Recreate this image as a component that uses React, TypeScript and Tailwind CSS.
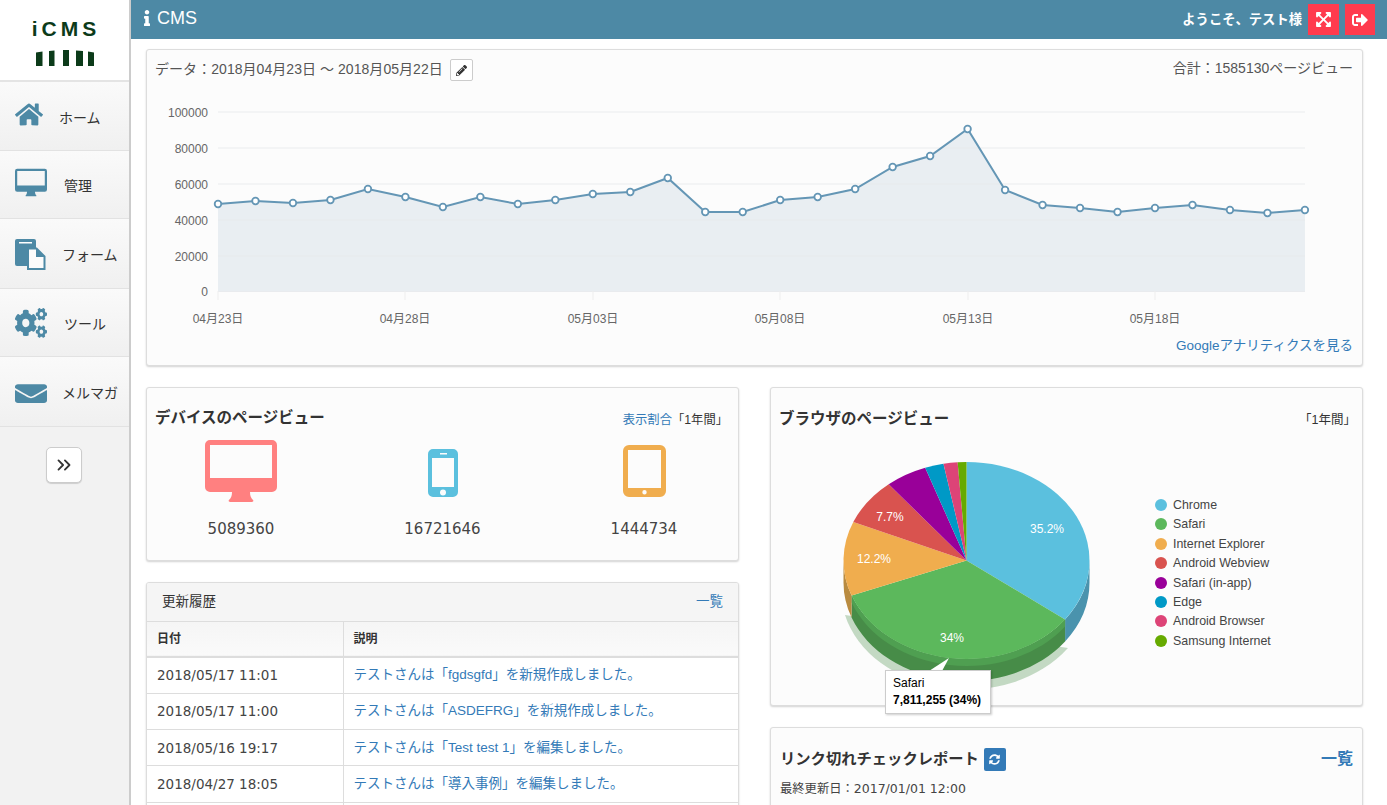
import React from "react";
import {
  FaHome,
  FaCogs,
  FaEnvelope,
  FaInfo,
  FaExpandArrowsAlt,
  FaSignOutAlt,
  FaPencilAlt,
  FaSyncAlt,
} from "react-icons/fa";
import { ChevronsRight } from "lucide-react";

const sans = "font-['Liberation_Sans','Noto_Sans_CJK_JP',sans-serif]";
const wide = "font-['DejaVu_Sans',sans-serif]";
const panel = "rounded-[3px] border border-[#ddd] bg-[#fcfcfc] shadow-[0_1px_2px_rgba(0,0,0,0.18)]";

// full width colon sits in the middle of its box in the TC font, like the reference
const Colon = () => <span className="font-['Noto_Sans_CJK_TC',sans-serif]">：</span>;

const DesktopIcon = ({ className }: { className: string }) => (
  <svg viewBox="0 0 72 62" className={className} fill="currentColor">
    <path
      fillRule="evenodd"
      d="M5 0h62a5 5 0 0 1 5 5v42a5 5 0 0 1-5 5H45c0 4 1 6 3 8 1 1 0 2-1 2H25c-1 0-2-1-1-2 2-2 3-4 3-8H5a5 5 0 0 1-5-5V5a5 5 0 0 1 5-5zm0 5v33h62V5z"
    />
  </svg>
);

const PhoneIcon = ({ className }: { className: string }) => (
  <svg viewBox="0 0 30 48" className={className} fill="currentColor">
    <path
      fillRule="evenodd"
      d="M5 0h20a5 5 0 0 1 5 5v38a5 5 0 0 1-5 5H5a5 5 0 0 1-5-5V5a5 5 0 0 1 5-5zm7 4v1.500h7V4zM4 9v29h22V9zm11 31.500a3 3 0 1 0 0 6 3 3 0 0 0 0-6z"
    />
  </svg>
);

const TabletIcon = ({ className }: { className: string }) => (
  <svg viewBox="0 0 43 52" className={className} fill="currentColor">
    <path
      fillRule="evenodd"
      d="M6 0h31a6 6 0 0 1 6 6v40a6 6 0 0 1-6 6H6a6 6 0 0 1-6-6V6a6 6 0 0 1 6-6zm-1 5v38h33V5zm16.500 40a2.200 2.200 0 1 0 0 4.400 2.200 2.200 0 0 0 0-4.400z"
    />
  </svg>
);

const FormIcon = ({ className }: { className: string }) => (
  <svg viewBox="0 0 31 31" className={className}>
    <path d="M2 0h17a2 2 0 0 1 2 2v25H2a2 2 0 0 1-2-2V2a2 2 0 0 1 2-2z" fill="#4d89a5" />
    <rect x="4" y="3" width="13" height="1.500" fill="#fff" />
    <path d="M13 9.500h8.500l8 8V30H13z" fill="#fbfbfb" stroke="#4d89a5" strokeWidth="2" />
    <path d="M21 9.500V18h8.500z" fill="#4d89a5" />
  </svg>
);

const navItems = [
  { label: "ホーム", icon: <FaHome className="h-[25px] w-[28px]" />, h: "h-[69px]", text: "ml-[12px]", iconPos: "-mt-[3px]" },
  { label: "管理", icon: <DesktopIcon className="h-[29px] w-[33px]" />, h: "h-[68px]", text: "ml-[17px]", iconPos: "-mt-[4px]" },
  { label: "フォーム", icon: <FormIcon className="h-[31px] w-[31px]" />, h: "h-[70px]", text: "ml-[15px]", iconPos: "mt-[2px]" },
  { label: "ツール", icon: <FaCogs preserveAspectRatio="none" className="h-[30px] w-[33px]" />, h: "h-[68px]", text: "ml-[17px]", iconPos: "mt-0" },
  { label: "メルマガ", icon: <FaEnvelope preserveAspectRatio="none" className="h-[25px] w-[32px]" />, h: "h-[70px]", text: "ml-[15px]", iconPos: "mt-[3px]" },
];

const chartY = [204, 201, 203, 200, 189, 197, 207, 197, 204, 200, 194, 192, 178, 212, 212, 200, 197, 189, 167, 156, 129, 190, 205, 208, 212, 208, 205, 210, 213, 210];
const chartPts = chartY.map((y, i) => [218 + i * 37.48, y]);
const gridLines = [
  { y: 112, label: "100000" },
  { y: 148, label: "80000" },
  { y: 184, label: "60000" },
  { y: 220, label: "40000" },
  { y: 256, label: "20000" },
  { y: 291.5, label: "0" },
];
const xTicks = [
  { x: 218, label: "04月23日" },
  { x: 405, label: "04月28日" },
  { x: 593, label: "05月03日" },
  { x: 780, label: "05月08日" },
  { x: 968, label: "05月13日" },
  { x: 1155, label: "05月18日" },
];

const PageViewChart = () => {
  const line = chartPts.map((p) => p.join(",")).join(" ");
  return (
    <svg viewBox="147 90 1215 240" className="block h-[240px] w-[1215px]">
      <polygon points={`218,291.500 ${line} 1305,291.500`} fill="#e9eef2" />
      {gridLines.map((g) => (
        <g key={g.y}>
          <line x1="218" x2="1305" y1={g.y} y2={g.y} stroke="#e6e9eb" strokeOpacity="0.8" />
          <text x="208" y={g.y + 4.5} textAnchor="end" fontSize="12" fill="#666">
            {g.label}
          </text>
        </g>
      ))}
      {xTicks.map((t) => (
        <g key={t.x}>
          <line x1={t.x} x2={t.x} y1="291" y2="300" stroke="#eee" />
          <text x={t.x} y="323" textAnchor="middle" fontSize="12" fill="#666">
            {t.label}
          </text>
        </g>
      ))}
      <polyline points={line} fill="none" stroke="#6496b5" strokeWidth="2" />
      {chartPts.map(([x, y]) => (
        <circle key={x} cx={x} cy={y} r="3.300" fill="#fff" stroke="#6496b5" strokeWidth="1.800" />
      ))}
    </svg>
  );
};

const browsers = [
  { name: "Chrome", pct: 35.2, color: "#5bc0de", label: "35.2%", lx: 1047, ly: 533 },
  { name: "Safari", pct: 34, color: "#5cb85c", label: "34%", lx: 952, ly: 642 },
  { name: "Internet Explorer", pct: 12.2, color: "#f0ad4e", label: "12.2%", lx: 874, ly: 563 },
  { name: "Android Webview", pct: 7.7, color: "#d9534f", label: "7.7%", lx: 890, ly: 521 },
  { name: "Safari (in-app)", pct: 5.45, color: "#990099", label: "", lx: 0, ly: 0 },
  { name: "Edge", pct: 2.45, color: "#0099c6", label: "", lx: 0, ly: 0 },
  { name: "Android Browser", pct: 1.85, color: "#dd4477", label: "", lx: 0, ly: 0 },
  { name: "Samsung Internet", pct: 1.15, color: "#66aa00", label: "", lx: 0, ly: 0 },
];

const cx = 966.5;
const cy = 560.5;
const rx = 123;
const ry = 98.5;
const pt = (deg: number, off = 0) => {
  const a = (deg * Math.PI) / 180;
  return `${(cx + rx * Math.sin(a)).toFixed(2)} ${(cy - ry * Math.cos(a) + off).toFixed(2)}`;
};
const slicePath = (a: number, b: number) =>
  `M${cx} ${cy}L${pt(a)}A${rx} ${ry} 0 ${b - a > 180 ? 1 : 0} 1 ${pt(b)}Z`;
const sidePath = (a: number, b: number, d: number) =>
  `M${pt(a)}A${rx} ${ry} 0 0 1 ${pt(b)}L${pt(b, d)}A${rx} ${ry} 0 0 0 ${pt(a, d)}Z`;

const BrowserPie = () => {
  let start = 0;
  const slices = browsers.map((b) => {
    const s = { ...b, a: start, b: start + (b.pct / 100) * 360 };
    start = s.b;
    return s;
  });
  return (
    <svg viewBox="771 450 376 250" className="block h-[250px] w-[376px] overflow-visible">
      {/* soft shadow under the disc */}
      <path d="M845 615A125 99 0 0 0 1068 648Z" fill="#c3d9c3" />
      <path d={sidePath(90, 126.72, 22)} fill="#4a93ad" />
      <path d={sidePath(126.72, 249.12, 22)} fill="#478c48" />
      <path d={sidePath(126.72, 249.12, 7)} fill="#4f9f51" />
      <path d={sidePath(249.12, 270, 22)} fill="#b98b40" />
      {slices.map((s) => (
        <path key={s.name} d={slicePath(s.a, s.b)} fill={s.color} />
      ))}
      {slices
        .filter((s) => s.label)
        .map((s) => (
          <text key={s.name} x={s.lx} y={s.ly} textAnchor="middle" fontSize="12" fill="#fff">
            {s.label}
          </text>
        ))}
      <polygon points="929,671 949,658 942,671" fill="#fff" />
    </svg>
  );
};

const historyRows = [
  { date: "2018/05/17 11:01", text: "テストさんは「fgdsgfd」を新規作成しました。" },
  { date: "2018/05/17 11:00", text: "テストさんは「ASDEFRG」を新規作成しました。" },
  { date: "2018/05/16 19:17", text: "テストさんは「Test test 1」を編集しました。" },
  { date: "2018/04/27 18:05", text: "テストさんは「導入事例」を編集しました。" },
];

export default function App() {
  return (
    <div className={`flex h-[805px] overflow-hidden bg-white text-[#333] ${sans}`}>
      {/* Sidebar */}
      <aside className="w-[131px] shrink-0 border-r-2 border-[#ccc] bg-[#f2f2f2]">
        <div className="flex h-[82px] flex-col items-center border-b-2 border-[#e4e4e4] bg-white pt-[17px]">
          <div className="pl-[3px] text-[21px] leading-[24px] font-bold tracking-[4px] text-[#0c3b1a]">iCMS</div>
          <svg viewBox="0 0 58 16" className="mt-[9px] h-[16px] w-[58px]" fill="#0c3b1a">
            <path d="M0 2.500 6.500 1.500V16H0z" />
            <path d="M13 1 18.500 .500V16H13z" />
            <path d="M27 0h6v16h-6z" />
            <path d="M40 .500 47 1v15h-7z" />
            <path d="M52 1.500 58 2.500V16h-6z" />
          </svg>
        </div>
        {navItems.map((item) => (
          <div
            key={item.label}
            className={`flex items-center border-b border-[#e2e2e2] bg-gradient-to-b from-[#fafafa] to-[#f0f0f0] pl-[15px] ${item.h}`}
          >
            <span className={`flex w-[32px] justify-start text-[#4d89a5] ${item.iconPos}`}>{item.icon}</span>
            <span className={`mt-[4px] text-[14px] text-[#333] ${item.text}`}>{item.label}</span>
          </div>
        ))}
        <div className="mt-[20px] flex justify-center pr-[2px]">
          <button className="flex h-[36px] w-[36px] items-center justify-center rounded-[5px] border border-[#ccc] bg-white shadow-[0_1px_1px_rgba(0,0,0,0.15)]">
            <ChevronsRight className="h-[22px] w-[22px] text-[#333]" strokeWidth={2} />
          </button>
        </div>
      </aside>

      <div className="min-w-0 flex-1">
        {/* Top bar */}
        <header className="flex h-[39px] items-center justify-between bg-[#4d89a5] pl-[11px] pr-[12px] text-white">
          <div className="flex items-center gap-[5px]">
            <FaInfo className="-mt-[3px] h-[16px] w-[10px]" />
            <span className="-mt-[3px] text-[18px]">CMS</span>
          </div>
          <div className="flex items-center">
            <span className="mr-[6px] text-[13.300px] font-bold">ようこそ、テスト様</span>
            <button className="flex h-[31px] w-[31px] items-center justify-center bg-[#ff3b4e]">
              <FaExpandArrowsAlt className="h-[17px] w-[17px]" />
            </button>
            <button className="ml-[6px] flex h-[31px] w-[30px] items-center justify-center bg-[#ff3b4e]">
              <FaSignOutAlt className="h-[16px] w-[16px]" />
            </button>
          </div>
        </header>

        <main className="px-[15px] pt-[10px]">
          {/* Page view chart */}
          <section className={`h-[317px] w-[1217px] ${panel}`}>
            <div className="flex h-[40px] items-center justify-between px-[8px]">
              <div className="flex items-center text-[14px] text-[#555]">
                <span className="-mt-[2px] tracking-[0.05px]">
                  データ
                  <Colon />
                  2018月04月23日 〜 2018月05月22日
                </span>
                <button className="ml-[7px] flex h-[22px] w-[23px] items-center justify-center rounded-[2px] border border-[#ccc] bg-white">
                  <FaPencilAlt className="h-[11px] w-[11px] text-[#333]" />
                </button>
              </div>
              <span className="-mt-[4px] mr-[1px] text-[14px] text-[#555]">
                合計
                <Colon />
                1585130ページビュー
              </span>
            </div>
            <PageViewChart />
            <div className="mt-[6px] pr-[9px] text-right text-[13.500px] text-[#337ab7]">Googleアナリティクスを見る</div>
          </section>

          <div className="mt-[21px] grid w-[1217px] grid-cols-[593px_593px] gap-x-[31px]">
            <div className="flex flex-col gap-[21px]">
              {/* Devices */}
              <section className={`h-[174px] ${panel}`}>
                <div className="flex items-center justify-between pl-[8px] pr-[10px] pt-[18px]">
                  <h2 className="text-[15.500px] leading-[24px] font-bold">デバイスのページビュー</h2>
                  <span className="mt-[5px] text-[12.300px]">
                    <span className="text-[#337ab7]">表示割合</span>「1年間」
                  </span>
                </div>
                <div className="grid grid-cols-[188px_215px_188px] pt-[10px]">
                  <div className="flex flex-col items-center">
                    <div className="flex h-[62px] items-end">
                      <DesktopIcon className="h-[62px] w-[72px] text-[#ff8080]" />
                    </div>
                    <span className={`mt-[16px] text-[15px] text-[#444] ${wide}`}>5089360</span>
                  </div>
                  <div className="flex flex-col items-center">
                    <div className="flex h-[57px] items-end">
                      <PhoneIcon className="h-[48px] w-[30px] text-[#5bc0de]" />
                    </div>
                    <span className={`mt-[21px] text-[15px] text-[#444] ${wide}`}>16721646</span>
                  </div>
                  <div className="flex flex-col items-center">
                    <div className="flex h-[57px] items-end">
                      <TabletIcon className="h-[52px] w-[43px] text-[#f0ad4e]" />
                    </div>
                    <span className={`mt-[21px] text-[15px] text-[#444] ${wide}`}>1444734</span>
                  </div>
                </div>
              </section>

              {/* Update history */}
              <section className={`${panel} overflow-hidden`}>
                <div className="flex h-[39px] items-center justify-between border-b border-[#ddd] bg-[#f5f5f5] px-[15px] text-[13.500px]">
                  <span>更新履歴</span>
                  <span className="text-[#337ab7]">一覧</span>
                </div>
                <table className="w-full border-collapse text-[13.500px]">
                  <thead>
                    <tr className="h-[35px] border-b-2 border-[#ddd] bg-gradient-to-b from-[#f5f5f5] to-[#fafafa] text-left text-[12px]">
                      <th className="w-[196px] border-r border-[#ddd] pl-[10px] font-bold">日付</th>
                      <th className="pl-[10px] font-bold">説明</th>
                    </tr>
                  </thead>
                  <tbody className="bg-white">
                    {historyRows.map((row) => (
                      <tr key={row.text} className="h-[36.300px] border-b border-[#ddd]">
                        <td className={`border-r border-[#ddd] pl-[10px] text-[13.500px] text-[#444] ${wide}`}>{row.date}</td>
                        <td className="pl-[10px] text-[#337ab7]">{row.text}</td>
                      </tr>
                    ))}
                    <tr className="h-[36px]">
                      <td className="border-r border-[#ddd]" />
                      <td />
                    </tr>
                  </tbody>
                </table>
              </section>
            </div>

            <div className="flex flex-col gap-[21px]">
              {/* Browsers */}
              <section className={`h-[319px] ${panel}`}>
                <div className="flex items-center justify-between pl-[8px] pr-[6px] pt-[19px]">
                  <h2 className="text-[15.500px] leading-[24px] font-bold">ブラウザのページビュー</h2>
                  <span className="mt-[3px] text-[12.500px]">「1年間」</span>
                </div>
                <div className="flex pt-[19px]">
                  <div className="relative w-[376px]">
                    <BrowserPie />
                    <div className="absolute left-[114px] top-[220px] z-10 h-[44px] w-[106px] border border-[#ccc] bg-white pl-[7px] pt-[4px] text-[12px] leading-[17px] text-black shadow-[1px_1px_2px_rgba(0,0,0,0.2)]">
                      <div>Safari</div>
                      <div className="font-bold whitespace-nowrap">7,811,255 (34%)</div>
                    </div>
                  </div>
                  <ul className="ml-[8px] mt-[47px] flex flex-col gap-[3.400px] text-[12.400px] leading-[16px] text-[#444]">
                    {browsers.map((b) => (
                      <li key={b.name} className="flex items-center gap-[6px]">
                        <svg viewBox="0 0 12 12" className="h-[12px] w-[12px]">
                          <circle cx="6" cy="6" r="6" fill={b.color} />
                        </svg>
                        {b.name}
                      </li>
                    ))}
                  </ul>
                </div>
              </section>

              {/* Broken links */}
              <section className={`h-[200px] ${panel} px-[9px] pt-[19px]`}>
                <div className="flex items-center justify-between">
                  <div className="flex items-center">
                    <h2 className="text-[15.300px] leading-[24px] font-bold">リンク切れチェックレポート</h2>
                    <button className="ml-[5px] flex h-[23px] w-[22px] items-center justify-center rounded-[2px] bg-[#337ab7]">
                      <FaSyncAlt className="h-[11px] w-[11px] text-white" />
                    </button>
                  </div>
                  <span className="text-[16px] font-bold text-[#337ab7]">一覧</span>
                </div>
                <p className="mt-[8px] text-[12.300px] text-[#444]">
                  最終更新日
                  <Colon />
                  <span className={`text-[12.500px] ${wide}`}>2017/01/01 12:00</span>
                </p>
              </section>
            </div>
          </div>
        </main>
      </div>
    </div>
  );
}
